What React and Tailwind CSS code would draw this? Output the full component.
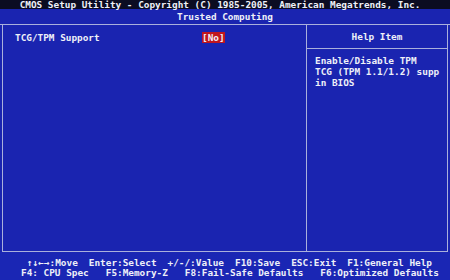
export default function App() {
  const font = { fontFamily: '"DejaVu Sans Mono", "Liberation Mono", monospace' };
  return (
    <div
      className="w-[450px] h-[280px] bg-[#1a24b0] text-[#eef0f8] font-bold text-[9.4px] overflow-hidden flex flex-col"
      style={font}
    >
      <div className="h-[9px] bg-[#0b0c22] leading-[9px] flex justify-center pr-[10px] whitespace-pre">
        CMOS Setup Utility - Copyright (C) 1985-2005, American Megatrends, Inc.
      </div>
      <div className="h-[16px] leading-[15px] text-center border-b border-[#aab0dc]">Trusted Computing</div>
      <div className="mx-[2px] h-[227px] border-x border-b border-[#aab0dc] flex">
        <div className="w-[304px] border-r border-[#aab0dc] pt-[7px] pl-[12px] flex leading-[11px]">
          <span className="w-[187px]">TCG/TPM Support</span>
          <span className="bg-[#c0161e] h-[11px]">[No]</span>
        </div>
        <div className="flex-1 flex flex-col">
          <div className="h-[24px] border-b border-[#aab0dc] flex items-center justify-center leading-[11px]">
            Help Item
          </div>
          <div className="pl-[8px] pt-[6px] leading-[11px] whitespace-pre">
            <div>Enable/Disable TPM</div>
            <div>TCG (TPM 1.1/1.2) supp</div>
            <div>in BIOS</div>
          </div>
        </div>
      </div>
      <div className="flex-1 bg-[#1a26b4] pt-[6px] leading-[10px] whitespace-pre">
        <div className="flex gap-[11px] pl-[27px]">
          <span>↑↓←→:Move</span>
          <span>Enter:Select</span>
          <span>+/-/:Value</span>
          <span>F10:Save</span>
          <span>ESC:Exit</span>
          <span>F1:General Help</span>
        </div>
        <div className="flex gap-[17px] pl-[21px]">
          <span>F4: CPU Spec</span>
          <span>F5:Memory-Z</span>
          <span>F8:Fail-Safe Defaults</span>
          <span>F6:Optimized Defaults</span>
        </div>
      </div>
    </div>
  );
}
